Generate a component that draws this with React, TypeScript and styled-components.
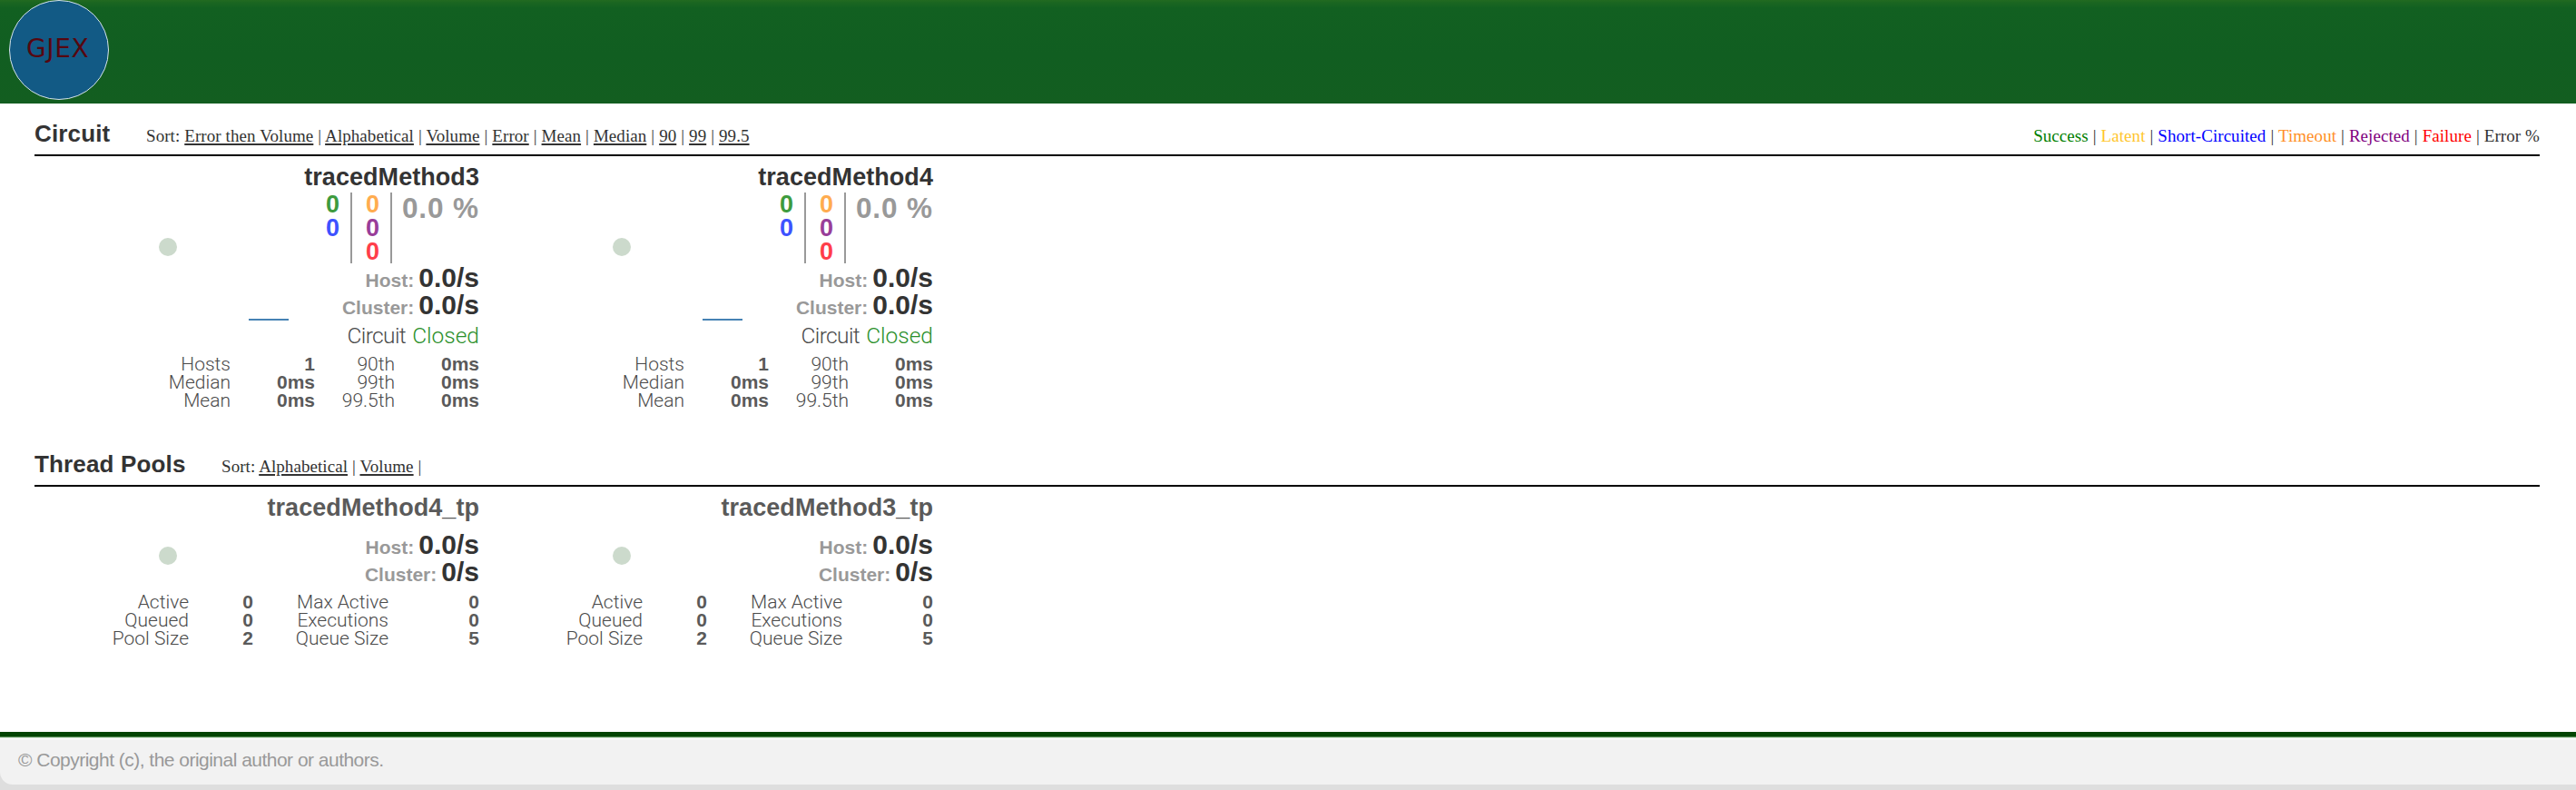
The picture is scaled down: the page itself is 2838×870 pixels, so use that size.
import React from 'react';
import styled, { createGlobalStyle } from 'styled-components';

const sans = '"Liberation Sans", Arial, sans-serif';
const light = 'Roboto, "Liberation Sans", sans-serif';
const serif = '"Liberation Serif", "Times New Roman", serif';

const GlobalStyle = createGlobalStyle`
  * { box-sizing: border-box; }
  body { margin: 0; background: #dedede; font-family: ${sans}; }
`;

const Page = styled.div`
  display: flex;
  flex-direction: column;
  height: 870px;
`;

const Header = styled.header`
  height: 114px;
  padding-left: 10px;
  background: linear-gradient(#226a20 0, #1a6621 3px, #126021 9px, #115e21 60px, #135e20 100%);
`;

const Logo = styled.div`
  width: 110px;
  height: 110px;
  border: 1px solid #d5e3ea;
  border-radius: 50%;
  background: #125a85;
  color: #560710;
  font: 28px/32px "DejaVu Sans", Verdana, sans-serif;
  letter-spacing: 0.6px;
  padding: 37px 0 0 18px;
`;

const Main = styled.main`
  height: 692px;
  padding: 0 40px 0 38px;
  background: #fff;
`;

const Section = styled.section`
  height: 364px;
`;

const SectionHead = styled.div`
  display: flex;
  align-items: baseline;
  height: 58px;
  padding-top: 18px;
  border-bottom: 2px solid #000;
`;

const Title = styled.h2<{ $width: number }>`
  width: ${p => p.$width}px;
  margin: 0;
  color: #333;
  font: bold 26px/30px ${sans};
  letter-spacing: 0.15px;
  white-space: nowrap;
`;

const SortBar = styled.div`
  color: #333;
  font: 19px/24px ${serif};
  letter-spacing: 0.06px;
  word-spacing: 0.17px;
  white-space: nowrap;
`;

const SortLink = styled.a`
  color: #333;
  text-decoration: underline;
  text-decoration-thickness: 2px;
  text-underline-offset: 2px;
`;

const Legend = styled(SortBar)`
  margin-left: auto;
`;

const LegendItem = styled.span<{ $color: string }>`
  color: ${p => p.$color};
`;

const Cards = styled.div`
  display: flex;
  gap: 10px;
`;

const Card = styled.article`
  width: 490px;
`;

const Name = styled.h3<{ $color: string }>`
  margin: 7px 0 0;
  color: ${p => p.$color};
  font: bold 27px/32px ${sans};
  letter-spacing: 0.06px;
  text-align: right;
`;

const Body = styled.div`
  display: flex;
  justify-content: space-between;
`;

const Chart = styled.svg`
  display: block;
  width: 300px;
  height: 150px;
  margin-bottom: -80px;
  flex: none;
`;

const Metrics = styled.div<{ $top: number }>`
  display: flex;
  flex-direction: column;
  align-items: flex-end;
  flex: 1;
  padding-top: ${p => p.$top}px;
`;

const Counts = styled.div`
  display: flex;
  height: 78px;
  margin-bottom: 1px;
`;

const CountColumn = styled.div`
  width: 44px;
  padding-right: 12px;
  border-right: 2px solid #999;
  font: bold 27px/26px ${sans};
  text-align: right;
`;

const Count = styled.div<{ $color: string }>`
  color: ${p => p.$color};
`;

const ErrorRate = styled.div`
  width: 96px;
  color: #999;
  font: bold 31.5px/35px ${sans};
  letter-spacing: 0.9px;
  text-align: right;
  white-space: nowrap;
`;

const RateRow = styled.div`
  display: flex;
  align-items: baseline;
  gap: 5px;
  height: 30px;
  white-space: nowrap;
`;

const RateLabel = styled.span`
  color: #999;
  font: bold 21px/30px ${sans};
`;

const RateValue = styled.span`
  color: #333;
  font: bold 30px/30px ${sans};
`;

const Status = styled.div`
  display: flex;
  gap: 7px;
  margin-top: 5px;
  color: #4a4a4a;
  font: 300 24.5px/28px ${light};
`;

const StatusLabel = styled.span`
  letter-spacing: -0.6px;
`;

const StatusValue = styled.span`
  color: #2b902b;
`;

const Stats = styled.div<{ $columns: string; $top: number }>`
  display: grid;
  grid-template-columns: ${p => p.$columns};
  grid-auto-rows: 20px;
  align-items: baseline;
  margin-top: ${p => p.$top}px;
  text-align: right;
  white-space: nowrap;
`;

const StatLabel = styled.span`
  color: #4a4a4a;
  font: 300 21px/20px ${light};
`;

const StatValue = styled.span`
  color: #5a5a5a;
  font: bold 21px/20px ${sans};
`;

const Footer = styled.footer`
  height: 58px;
  padding: 19px 0 0 20px;
  border-radius: 0 0 0 14px;
  background: linear-gradient(#044504 5px, #4d854d 5px 6px, #cfe2cf 6px 7px, #fcfcfc 7px 8px, #f2f2f2 9px);
  color: #999;
  font: 21px/24px ${sans};
  letter-spacing: -0.52px;
`;

const sortLinks = (items: string[]) =>
  items.map((item, i) => (
    <React.Fragment key={item}>
      {i > 0 && ' | '}
      <SortLink>{item}</SortLink>
    </React.Fragment>
  ));

const legend: [string, string][] = [
  ['Success', '#008000'],
  ['Latent', '#ffc62e'],
  ['Short-Circuited', '#0000ff'],
  ['Timeout', '#ff8f26'],
  ['Rejected', '#800080'],
  ['Failure', '#ff0000'],
  ['Error %', '#333'],
];

const StatGrid = ({ columns, top, cells }: { columns: string; top: number; cells: string[] }) => (
  <Stats $columns={columns} $top={top}>
    {cells.map((cell, i) =>
      i % 2 ? <StatValue key={i}>{cell}</StatValue> : <StatLabel key={i}>{cell}</StatLabel>
    )}
  </Stats>
);

const Rate = ({ label, value }: { label: string; value: string }) => (
  <RateRow>
    <RateLabel>{label}</RateLabel>
    <RateValue>{value}</RateValue>
  </RateRow>
);

const CircuitCard = ({ name }: { name: string }) => (
  <Card>
    <Name $color="#333">{name}</Name>
    <Body>
      <Chart viewBox="0 0 300 150">
        <circle cx="147" cy="61" r="10" fill="#ccdacc" />
        <path d="M236 141H280" stroke="#4682b4" strokeWidth="2" />
      </Chart>
      <Metrics $top={1}>
        <Counts>
          <CountColumn>
            <Count $color="#3e9b3e">0</Count>
            <Count $color="#3e52ff">0</Count>
          </CountColumn>
          <CountColumn>
            <Count $color="#ffac4f">0</Count>
            <Count $color="#993e99">0</Count>
            <Count $color="#ff3e4a">0</Count>
          </CountColumn>
          <ErrorRate>0.0 %</ErrorRate>
        </Counts>
        <Rate label="Host:" value="0.0/s" />
        <Rate label="Cluster:" value="0.0/s" />
        <Status>
          <StatusLabel>Circuit</StatusLabel>
          <StatusValue>Closed</StatusValue>
        </Status>
      </Metrics>
    </Body>
    <StatGrid
      columns="216px 93px 88px 93px"
      top={7}
      cells={['Hosts', '1', '90th', '0ms', 'Median', '0ms', '99th', '0ms', 'Mean', '0ms', '99.5th', '0ms']}
    />
  </Card>
);

const PoolCard = ({ name }: { name: string }) => (
  <Card>
    <Name $color="#5a5a5a">{name}</Name>
    <Body>
      <Chart viewBox="0 0 300 150">
        <circle cx="147" cy="37" r="10" fill="#ccdacc" />
      </Chart>
      <Metrics $top={10}>
        <Rate label="Host:" value="0.0/s" />
        <Rate label="Cluster:" value="0/s" />
      </Metrics>
    </Body>
    <StatGrid
      columns="170px 71px 149px 100px"
      top={8}
      cells={['Active', '0', 'Max Active', '0', 'Queued', '0', 'Executions', '0', 'Pool Size', '2', 'Queue Size', '5']}
    />
  </Card>
);

export default function App() {
  return (
    <Page>
      <GlobalStyle />
      <Header>
        <Logo>GJEX</Logo>
      </Header>
      <Main>
        <Section>
          <SectionHead>
            <Title $width={123}>Circuit</Title>
            <SortBar>
              Sort: {sortLinks(['Error then Volume', 'Alphabetical', 'Volume', 'Error', 'Mean', 'Median', '90', '99', '99.5'])}
            </SortBar>
            <Legend>
              {legend.map(([text, color], i) => (
                <React.Fragment key={text}>
                  {i > 0 && ' | '}
                  <LegendItem $color={color}>{text}</LegendItem>
                </React.Fragment>
              ))}
            </Legend>
          </SectionHead>
          <Cards>
            <CircuitCard name="tracedMethod3" />
            <CircuitCard name="tracedMethod4" />
          </Cards>
        </Section>
        <Section>
          <SectionHead>
            <Title $width={206}>Thread Pools</Title>
            <SortBar>Sort: {sortLinks(['Alphabetical', 'Volume'])} |</SortBar>
          </SectionHead>
          <Cards>
            <PoolCard name="tracedMethod4_tp" />
            <PoolCard name="tracedMethod3_tp" />
          </Cards>
        </Section>
      </Main>
      <Footer>© Copyright (c), the original author or authors.</Footer>
    </Page>
  );
}
